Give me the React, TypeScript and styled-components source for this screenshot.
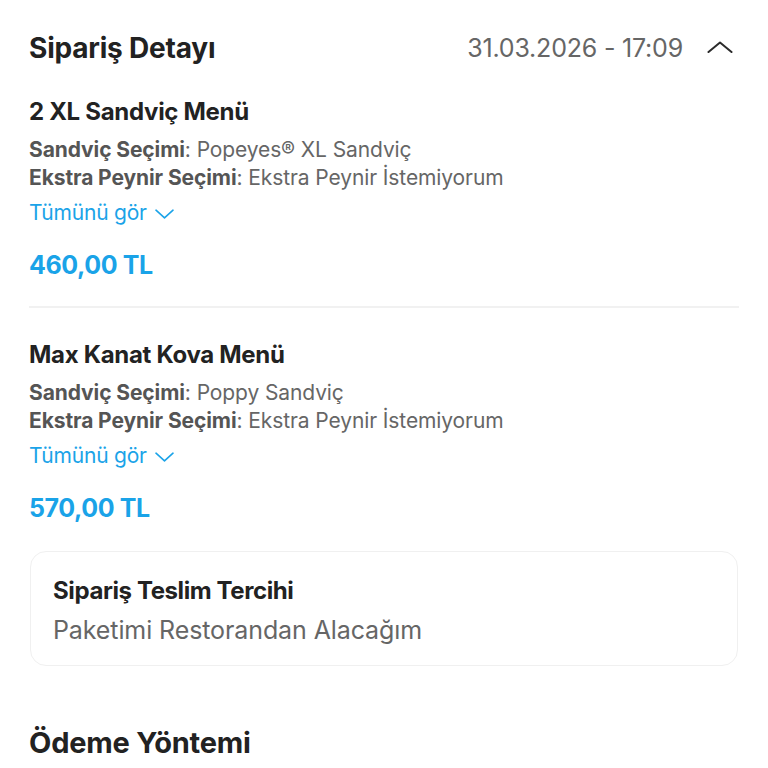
import React from 'react'
import styled, { createGlobalStyle } from 'styled-components'

const GlobalStyle = createGlobalStyle`
  html, body {
    margin: 0;
    padding: 0;
    background: #ffffff;
  }
  body {
    font-family: Inter, "Noto Sans", "Liberation Sans", sans-serif;
    -webkit-font-smoothing: antialiased;
  }
`

type Option = { label: string; value: string }
type Item = { name: string; options: Option[]; price: string }

const items: Item[] = [
  {
    name: '2 XL Sandviç Menü',
    options: [
      { label: 'Sandviç Seçimi', value: 'Popeyes® XL Sandviç' },
      { label: 'Ekstra Peynir Seçimi', value: 'Ekstra Peynir İstemiyorum' },
    ],
    price: '460,00 TL',
  },
  {
    name: 'Max Kanat Kova Menü',
    options: [
      { label: 'Sandviç Seçimi', value: 'Poppy Sandviç' },
      { label: 'Ekstra Peynir Seçimi', value: 'Ekstra Peynir İstemiyorum' },
    ],
    price: '570,00 TL',
  },
]

const ChevronUp = () => (
  <svg width="26" height="12" viewBox="0 0 26 12" fill="none" stroke="#2b2b2b" strokeWidth="2" strokeLinecap="round" strokeLinejoin="round">
    <path d="M1.5 11L13 1.5 24.5 11" />
  </svg>
)

const ChevronDown = () => (
  <svg width="19" height="10" viewBox="0 0 19 10" fill="none" stroke="#1aa3e8" strokeWidth="1.6" strokeLinecap="round" strokeLinejoin="round">
    <path d="M1 1.2l8.5 7.6 8.5-7.6" />
  </svg>
)

export default function App() {
  return (
    <>
      <GlobalStyle />
      <Page>
        <Header>
          <Title>Sipariş Detayı</Title>
          <HeaderRight>
            <DateText>31.03.2026 - 17:09</DateText>
            <ToggleButton aria-label="Daralt">
              <ChevronUp />
            </ToggleButton>
          </HeaderRight>
        </Header>

        {items.map((item, i) => (
          <ItemBlock key={item.name} $first={i === 0} $last={i === items.length - 1}>
            <ItemName>{item.name}</ItemName>
            <Options>
              {item.options.map((o) => (
                <OptionLine key={o.label}>
                  <OptionLabel>{o.label}</OptionLabel>: {o.value}
                </OptionLine>
              ))}
            </Options>
            <SeeAll>
              Tümünü gör <ChevronDown />
            </SeeAll>
            <Price>{item.price}</Price>
          </ItemBlock>
        ))}

        <DeliveryCard>
          <CardTitle>Sipariş Teslim Tercihi</CardTitle>
          <CardText>Paketimi Restorandan Alacağım</CardText>
        </DeliveryCard>

        <SectionTitle>Ödeme Yöntemi</SectionTitle>
      </Page>
    </>
  )
}

const Page = styled.div`
  padding: 29px 29px 0 29px;
  color: #222222;
`

const Header = styled.div`
  display: flex;
  align-items: center;
  justify-content: space-between;
  height: 38px;
`

const Title = styled.h1`
  margin: 0;
  font-size: 28px;
  line-height: 38px;
  font-weight: 700;
  letter-spacing: -0.2px;
  color: #222222;
`

const HeaderRight = styled.div`
  display: flex;
  align-items: center;
  gap: 24px;
`

const DateText = styled.span`
  font-size: 25px;
  font-weight: 400;
  color: #666666;
  letter-spacing: -0.2px;
`

const ToggleButton = styled.button`
  border: 0;
  background: transparent;
  padding: 0;
  display: flex;
  align-items: center;
  margin-right: 6px;
  margin-top: -2px;
`

const ItemBlock = styled.div<{ $first: boolean; $last: boolean }>`
  padding: ${(p) => (p.$first ? '29px' : '31px')} 0 ${(p) => (p.$last ? '27px' : '25px')};
  border-bottom: ${(p) => (p.$last ? 'none' : '2px solid #f1f1f1')};
`

const ItemName = styled.div`
  font-size: 24px;
  font-weight: 700;
  letter-spacing: -0.3px;
  color: #222222;
  line-height: 32px;
`

const Options = styled.div`
  margin-top: 8px;
`

const OptionLine = styled.div`
  font-size: 21px;
  line-height: 28px;
  color: #666666;
  letter-spacing: -0.1px;
`

const OptionLabel = styled.span`
  font-weight: 700;
  color: #555555;
`

const SeeAll = styled.div`
  display: flex;
  align-items: center;
  gap: 8px;
  margin-top: 7px;
  font-size: 21px;
  line-height: 28px;
  color: #1aa3e8;
  letter-spacing: -0.2px;

  svg {
    margin-top: 1px;
  }
`

const Price = styled.div`
  margin-top: 22px;
  font-size: 25px;
  font-weight: 700;
  line-height: 32px;
  color: #1aa3e8;
  letter-spacing: -0.4px;
`

const DeliveryCard = styled.div`
  margin: 0 1px;
  padding: 24px 22px 20px;
  border: 1.5px solid #f0f0f0;
  border-radius: 16px;
  display: flex;
  flex-direction: column;
  gap: 9px;
`

const CardTitle = styled.div`
  font-size: 24px;
  font-weight: 700;
  line-height: 30px;
  color: #222222;
  letter-spacing: -0.4px;
`

const CardText = styled.div`
  font-size: 25px;
  line-height: 30px;
  color: #666666;
  letter-spacing: -0.1px;
`

const SectionTitle = styled.h2`
  margin: 59px 0 0;
  font-size: 29px;
  line-height: 36px;
  font-weight: 700;
  letter-spacing: -0.2px;
  color: #222222;
`
